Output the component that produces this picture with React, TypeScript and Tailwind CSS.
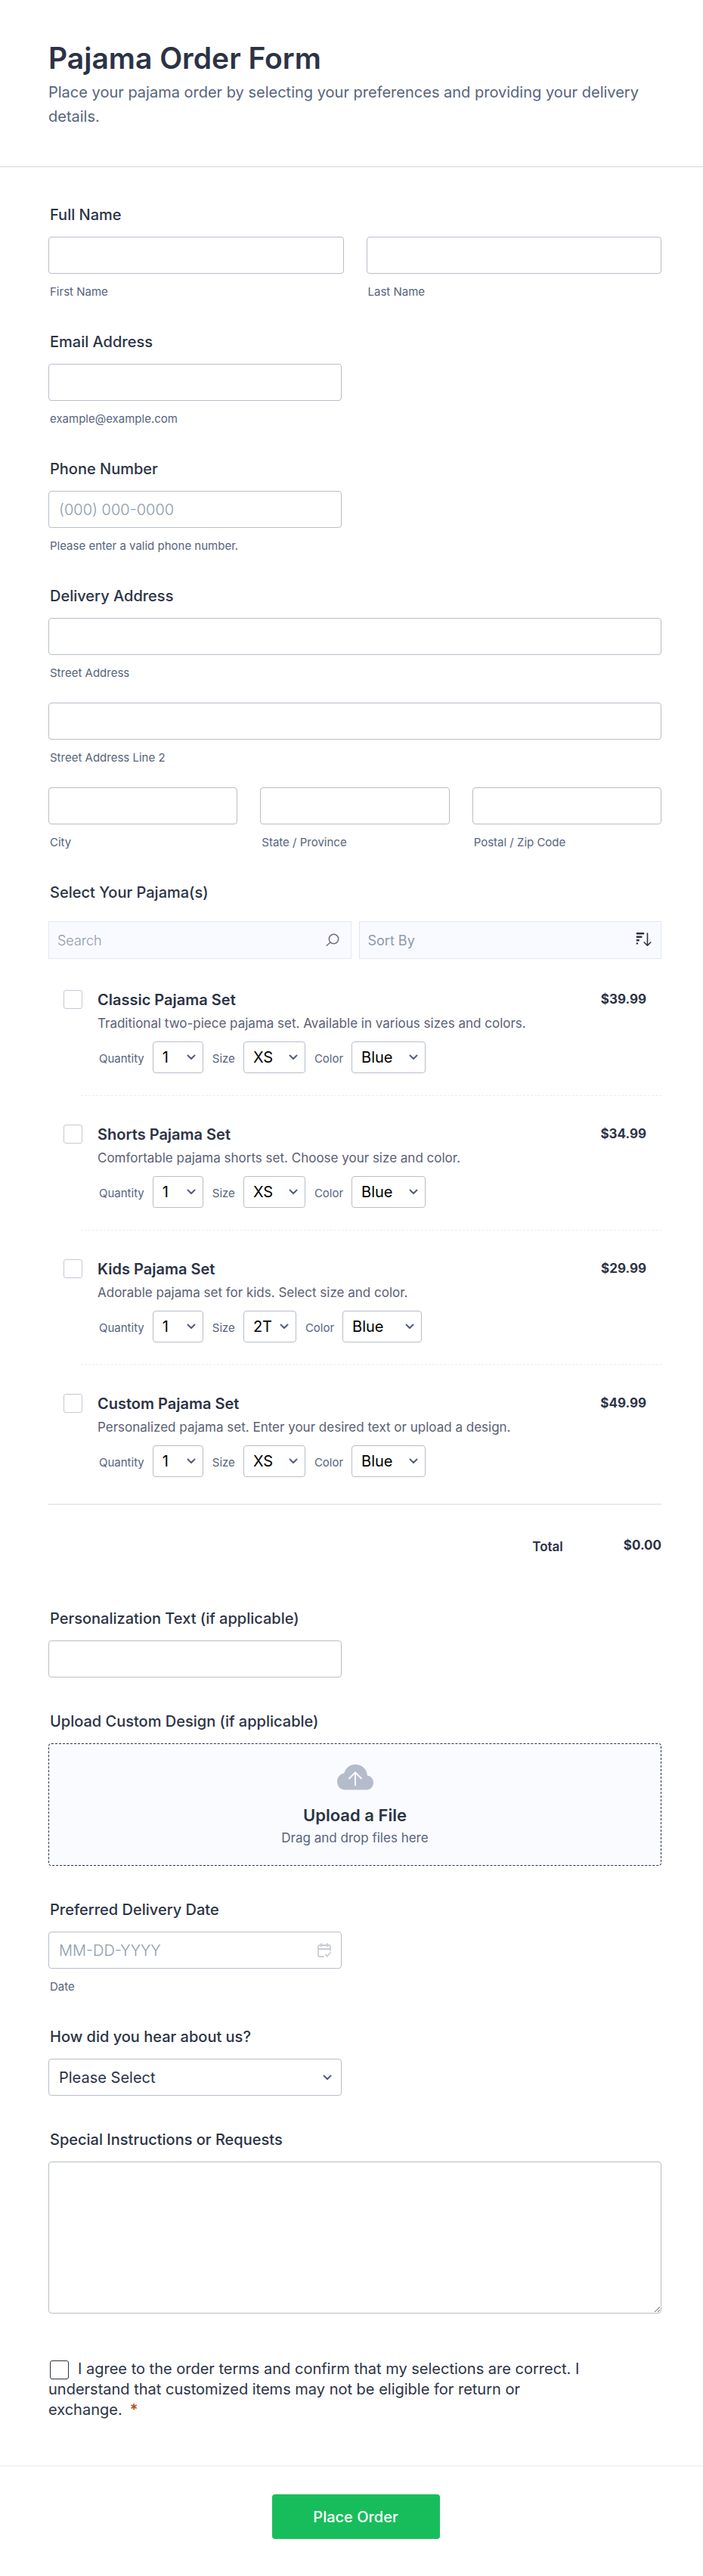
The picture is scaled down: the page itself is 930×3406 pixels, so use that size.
import { useState } from "react";
import type { ReactNode } from "react";

const products = [
  { id: "classic", name: "Classic Pajama Set", desc: "Traditional two-piece pajama set. Available in various sizes and colors.", price: "$39.99", sizes: ["XS", "S", "M", "L", "XL"], sizeWidth: "w-[82px]", colorWidth: "w-[98px]" },
  { id: "shorts", name: "Shorts Pajama Set", desc: "Comfortable pajama shorts set. Choose your size and color.", price: "$34.99", sizes: ["XS", "S", "M", "L", "XL"], sizeWidth: "w-[82px]", colorWidth: "w-[98px]" },
  { id: "kids", name: "Kids Pajama Set", desc: "Adorable pajama set for kids. Select size and color.", price: "$29.99", sizes: ["2T", "3T", "4T", "5T"], sizeWidth: "w-[70px]", colorWidth: "w-[105px]" },
  { id: "custom", name: "Custom Pajama Set", desc: "Personalized pajama set. Enter your desired text or upload a design.", price: "$49.99", sizes: ["XS", "S", "M", "L", "XL"], sizeWidth: "w-[82px]", colorWidth: "w-[98px]" },
];

const inputStyle =
  "block w-full h-[49px] rounded border border-[#b8bdc9] bg-white px-[13px] text-[20px] text-[#2c3345] placeholder:font-light placeholder:text-[#8d9aab]";
const labelStyle = "block px-0.5 mb-[17px] text-[20px] leading-6 font-medium text-[#2c3345]";
const subStyle = "block px-0.5 mt-4 text-[15px] leading-4 text-[#57647e]";

const Chevron = ({ className }: { className: string }) => (
  <svg className={`pointer-events-none absolute ${className}`} width="12" height="8" viewBox="0 0 12 8" fill="none" stroke="#535d7e" strokeWidth="2" strokeLinecap="round" strokeLinejoin="round">
    <path d="M1.5 1.5 6 6l4.5-4.5" />
  </svg>
);

const Field = ({ id, label, sub, children }: { id: string; label: string; sub?: string; children: ReactNode }) => (
  <div>
    <label htmlFor={id} className={labelStyle}>{label}</label>
    {children}
    {sub && <label htmlFor={id} className={subStyle}>{sub}</label>}
  </div>
);

const SubField = ({ id, sub }: { id: string; sub: string }) => (
  <div className="flex-1 min-w-0">
    <input id={id} type="text" className={inputStyle} />
    <label htmlFor={id} className={subStyle}>{sub}</label>
  </div>
);

const OptionSelect = ({ id, label, options, width }: { id: string; label: string; options: string[]; width: string }) => (
  <div className="flex items-baseline gap-[11px]">
    <label htmlFor={id} className="text-[15px] text-[#57647e]">{label}</label>
    <div className="relative">
      <select id={id} className={`${width} h-[42px] appearance-none rounded border border-[#b8bdc9] bg-white pl-3 text-[20px] text-black`}>
        {options.map((o) => (
          <option key={o}>{o}</option>
        ))}
      </select>
      <Chevron className="right-[10px] top-[17px]" />
    </div>
  </div>
);

const App = () => {
  const [file, setFile] = useState("");

  return (
    <form className="min-h-screen bg-white font-['Inter',sans-serif] text-[#2c3345]" onSubmit={(e) => e.preventDefault()}>
      {/* header */}
      <header className="border-b border-[#d7d8e1] pl-16 pr-[55px] pt-[52px] pb-12">
        <h1 className="text-[39px] leading-[50px] font-semibold">Pajama Order Form</h1>
        <p className="mt-1 pb-0.5 text-[20px] leading-8 text-[#57647e]">
          Place your pajama order by selecting your preferences and providing your delivery details.
        </p>
      </header>

      <main className="flex flex-col gap-[46px] pl-16 pr-[55px] pt-[51px] pb-[60px]">
        <fieldset>
          <legend className={labelStyle}>Full Name</legend>
          <div className="flex gap-[30px]">
            <SubField id="first" sub="First Name" />
            <SubField id="last" sub="Last Name" />
          </div>
        </fieldset>

        <Field id="email" label="Email Address" sub="example@example.com">
          <div className="max-w-[388px]"><input id="email" type="email" className={inputStyle} /></div>
        </Field>

        <Field id="phone" label="Phone Number" sub="Please enter a valid phone number.">
          <div className="max-w-[388px]"><input id="phone" type="tel" placeholder="(000) 000-0000" className={inputStyle} /></div>
        </Field>

        <fieldset>
          <legend className={labelStyle}>Delivery Address</legend>
          <div className="flex flex-col gap-[31px]">
            <SubField id="street" sub="Street Address" />
            <SubField id="street2" sub="Street Address Line 2" />
            <div className="flex gap-[30px]">
              <SubField id="city" sub="City" />
              <SubField id="state" sub="State / Province" />
              <SubField id="zip" sub="Postal / Zip Code" />
            </div>
          </div>
        </fieldset>

        {/* products */}
        <section>
          <h2 className="px-0.5 mb-[26px] text-[20px] leading-6 font-medium">Select Your Pajama(s)</h2>
          <div className="flex gap-2.5">
            <div className="relative flex-1">
              <input type="search" aria-label="Search" placeholder="Search" className="block w-full h-[50px] border border-[#e3e7f2] bg-[#f9faff] px-[11px] text-[18px] placeholder:font-light placeholder:text-[#8d9aab]" />
              <svg className="absolute right-4 top-4" width="18" height="18" viewBox="0 0 18 18" fill="none" stroke="#6b6f82" strokeWidth="1.5" strokeLinecap="round">
                <circle cx="10.5" cy="7.5" r="6.2" />
                <path d="M6 12 1.2 16.2" />
              </svg>
            </div>
            <div className="relative flex-1">
              <select aria-label="Sort By" className="block w-full h-[50px] appearance-none border border-[#e3e7f2] bg-[#f9faff] px-[11px] text-[18px] text-[#8d9aab]">
                <option>Sort By</option>
              </select>
              <svg className="pointer-events-none absolute right-[13px] top-[14px]" width="21" height="20" viewBox="0 0 21 20" fill="none" stroke="#2c3345" strokeLinecap="round">
                <path strokeWidth="2.4" d="M1.8 2.2h8.4M1.8 6.7h5.600M1.8 11.2h2M1.8 15.400h.2" />
                <path strokeWidth="1.6" strokeLinejoin="round" d="M15.5 2v16M11.2 14l4.3 4.2 4.3-4.2" />
              </svg>
            </div>
          </div>

          <ul className="mt-[3px]">
            {products.map((p, i) => (
              <li key={p.id}>
                <div className="flex pl-5 pr-5 pt-[38px] pb-[29px]">
                  <input type="checkbox" id={p.id} className="size-[25px] shrink-0 appearance-none rounded-[3px] border border-[#c3c8d4] checked:bg-[#2e69ff]" />
                  <div className="ml-5 flex-1">
                    <label htmlFor={p.id} className="block text-[20px] leading-[26px] font-semibold">{p.name}</label>
                    <p className="mt-1.5 text-[17px] leading-6 text-[#5b6075]">{p.desc}</p>
                    <div className="mt-3 ml-0.5 flex gap-3">
                      <OptionSelect id={`${p.id}-qty`} label="Quantity" options={["1", "2", "3", "4", "5"]} width="w-[67px]" />
                      <OptionSelect id={`${p.id}-size`} label="Size" options={p.sizes} width={p.sizeWidth} />
                      <OptionSelect id={`${p.id}-color`} label="Color" options={["Blue", "Pink", "White"]} width={p.colorWidth} />
                    </div>
                  </div>
                  <span className="text-[17px] leading-6 font-bold">{p.price}</span>
                </div>
                {i < products.length - 1 && <div className="ml-[43px] border-t border-dashed border-[#ebecf4]" />}
              </li>
            ))}
          </ul>
          <div className="mt-[6px] mb-[25px] flex justify-end border-t-2 border-[#e9eaf1] pt-[41px] text-[17px] leading-6">
            <span className="mt-0.5 font-semibold">Total</span>
            <span className="ml-20 font-bold">$0.00</span>
          </div>
        </section>

        <Field id="text" label="Personalization Text (if applicable)">
          <div className="max-w-[388px]"><input id="text" type="text" className={inputStyle} /></div>
        </Field>

        <div>
          <label htmlFor="upload" className={labelStyle}>Upload Custom Design (if applicable)</label>
          <label className="flex flex-col items-center rounded border border-dashed border-[#2c3345] bg-[#fafbff] pt-[27px] pb-6">
            <input id="upload" type="file" className="sr-only" onChange={(e) => setFile(e.target.value)} />
            <svg width="48" height="34" viewBox="0 0 48 34" fill="none">
              <path fill="#b4bccc" d="M40 14.500C39.200 5.800 32.500 0 24 0 16.800 0 11.200 4.500 9.300 11.500 3.800 12.500 0 17 0 22.500 0 29 4.500 33.500 10.500 33.500H38.500c5.500 0 9.500-4.200 9.500-9.500 0-5-3.500-8.800-8-9.500Z" />
              <path stroke="#fff" strokeWidth="1.8" strokeLinecap="round" strokeLinejoin="round" d="M24 27.500V10.500M16 18.500l8-8 8 8" />
            </svg>
            <span className="mt-[19px] text-[22px] leading-7 font-semibold">{file || "Upload a File"}</span>
            <span className="mt-1 text-[17px] leading-6 text-[#57647e]">Drag and drop files here</span>
          </label>
        </div>

        <Field id="date" label="Preferred Delivery Date" sub="Date">
          <div className="relative max-w-[388px]">
            <input id="date" type="text" placeholder="MM-DD-YYYY" className={inputStyle} />
            <svg className="absolute right-3.5 top-[15px]" width="18" height="19" viewBox="0 0 18 19" fill="none" stroke="#c8cbd6" strokeWidth="1.8" strokeLinecap="round" strokeLinejoin="round">
              <path d="M8 18H3a2 2 0 0 1-2-2V5a2 2 0 0 1 2-2h12a2 2 0 0 1 2 2v5M1 8h16M5 1v3.500M13 1v3.500M11 15.500l2 2 4-4.500" />
            </svg>
          </div>
        </Field>

        <Field id="hear" label="How did you hear about us?">
          <div className="relative max-w-[388px]">
            <select id="hear" className={`${inputStyle} appearance-none`}>
              <option>Please Select</option>
            </select>
            <Chevron className="right-[13px] top-[21px]" />
          </div>
        </Field>

        <Field id="notes" label="Special Instructions or Requests">
          <textarea id="notes" className="block w-full h-[201px] rounded border border-[#b8bdc9] p-3 text-[20px]" />
        </Field>

        {/* terms */}
        <div className="max-w-[705px] pt-3.5 text-[20px] leading-[27px]">
          <input type="checkbox" id="terms" className="ml-0.5 mr-3 size-[25px] appearance-none rounded-[3px] border border-[#2c3345] align-middle checked:bg-[#2e69ff]" />
          <label htmlFor="terms">
            I agree to the order terms and confirm that my selections are correct. I understand that customized items may not be eligible for return or exchange.
          </label>
          <span className="ml-2.5 font-semibold text-[#b5491a]">*</span>
        </div>
      </main>

      {/* submit */}
      <footer className="flex justify-center border-t border-[#e6eaf0] pt-[37px] pb-[50px] pl-[11px]">
        <button type="submit" className="h-[59px] w-[222px] rounded bg-[#18bd5b] text-[20px] font-medium text-white">Place Order</button>
      </footer>
    </form>
  );
};

export default App;
